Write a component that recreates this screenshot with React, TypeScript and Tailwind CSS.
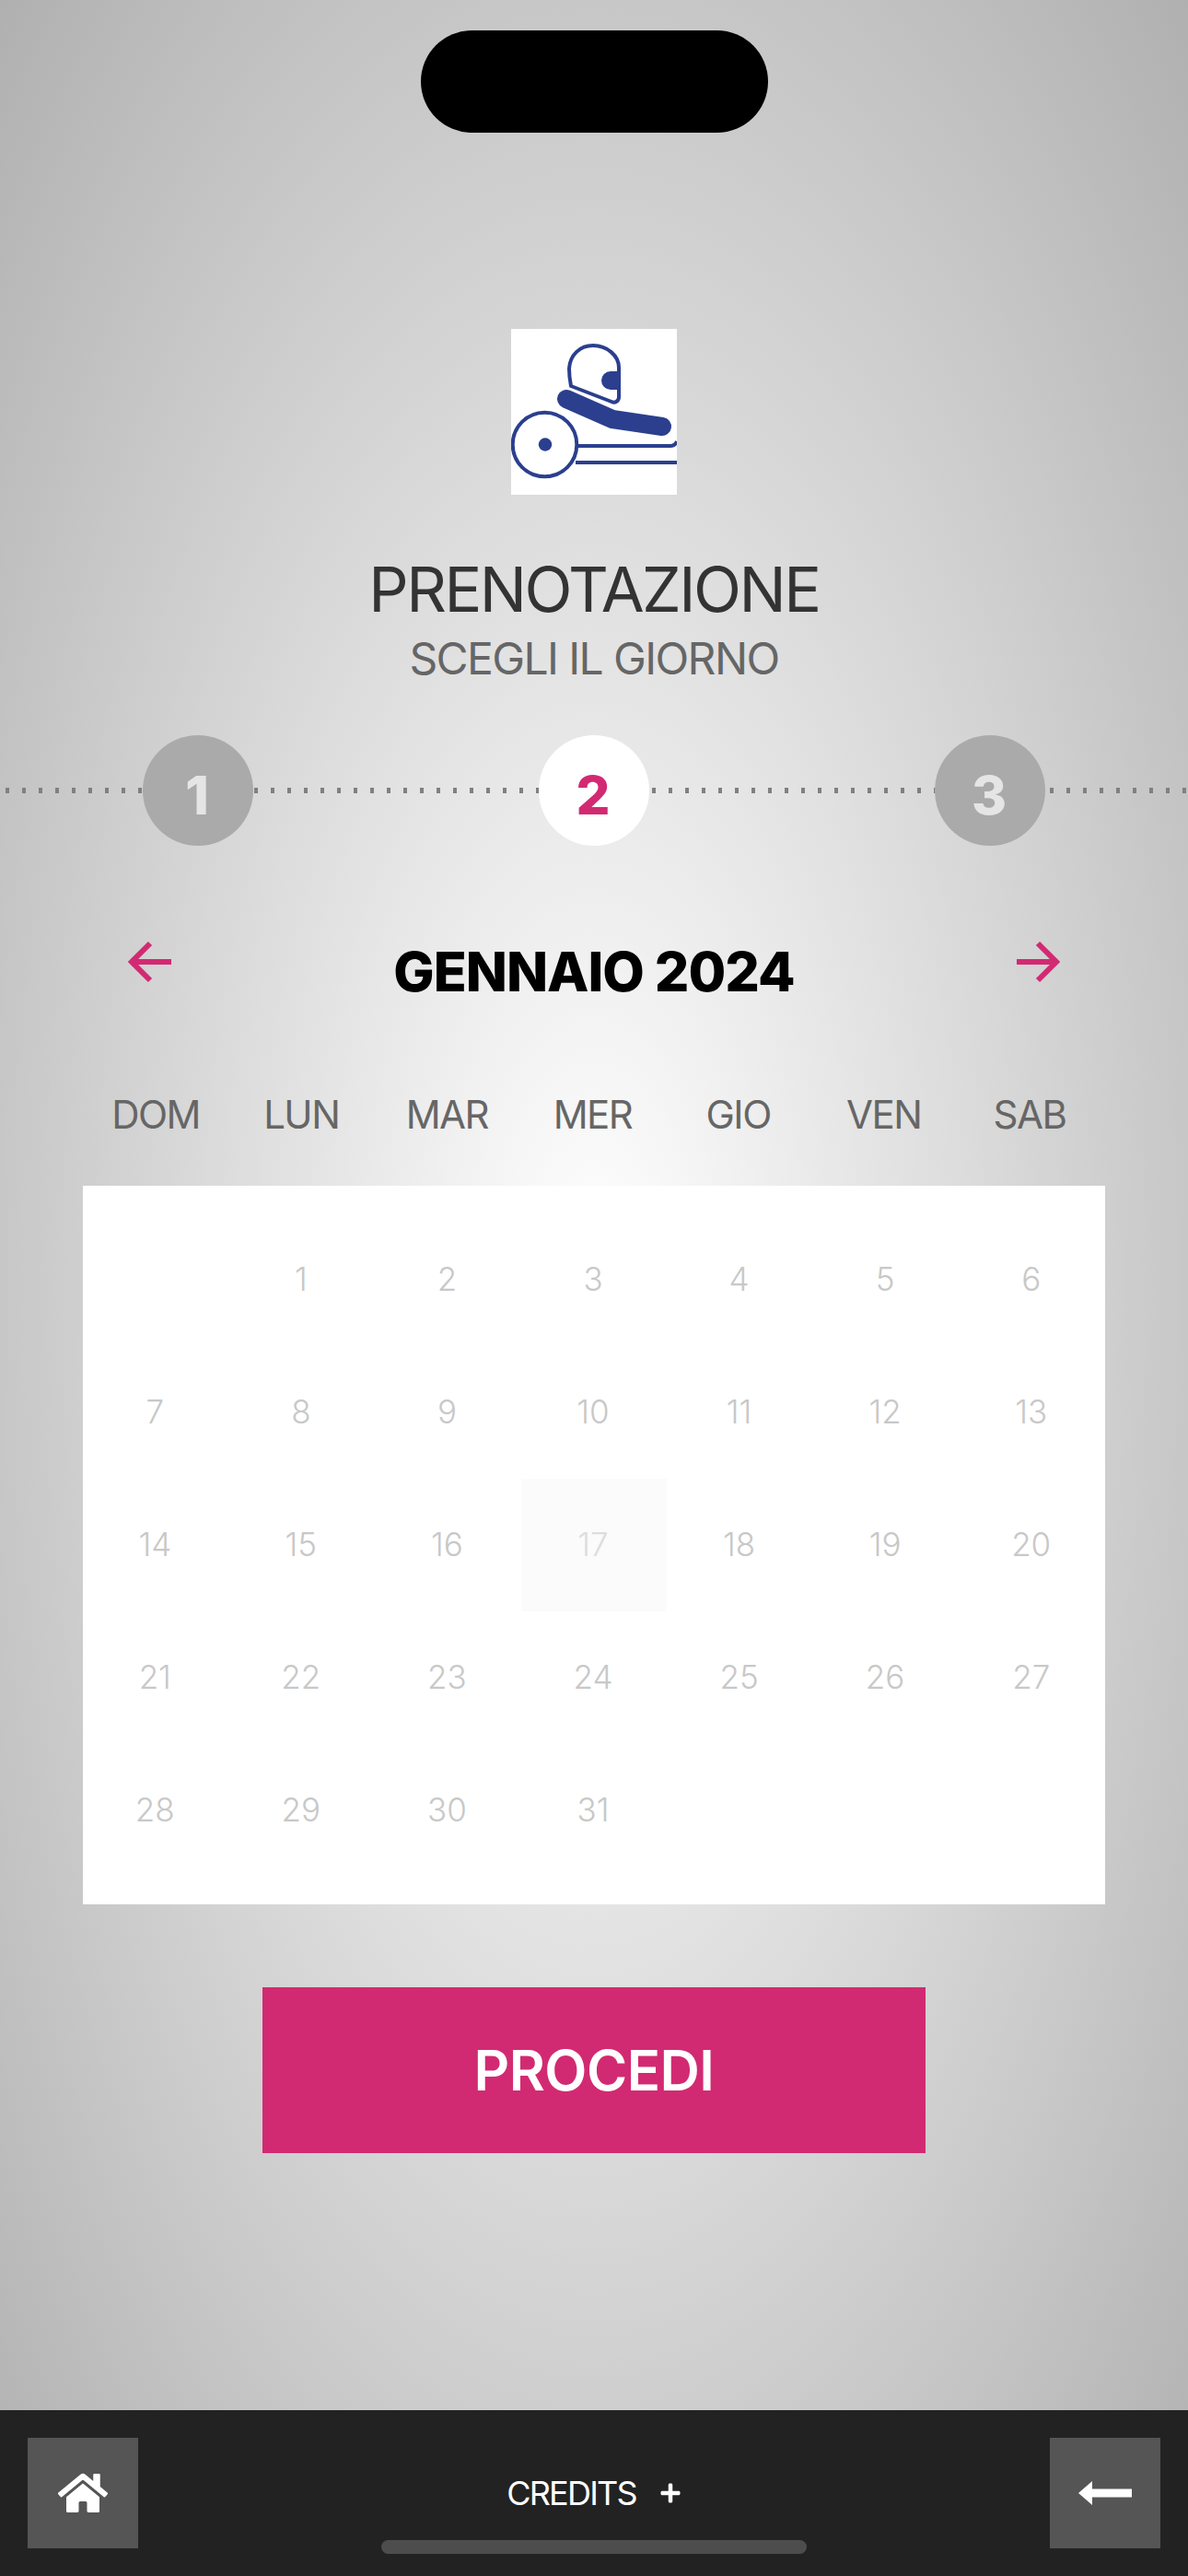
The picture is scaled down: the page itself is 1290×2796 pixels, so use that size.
import { FaHome, FaPlus } from "react-icons/fa";

const days = ["DOM", "LUN", "MAR", "MER", "GIO", "VEN", "SAB"];
const cells: (number | null)[] = [
  null, 1, 2, 3, 4, 5, 6,
  7, 8, 9, 10, 11, 12, 13,
  14, 15, 16, 17, 18, 19, 20,
  21, 22, 23, 24, 25, 26, 27,
  28, 29, 30, 31, null, null, null,
];

function Logo() {
  return (
    <svg viewBox="0 0 180 180" className="h-[180px] w-[180px] bg-white" fill="none" stroke="#2b3f8e">
      <circle cx="36.5" cy="125.5" r="34.8" strokeWidth="4" />
      <circle cx="37" cy="125.5" r="7.2" fill="#2b3f8e" stroke="none" />
      <path d="M65 62 C63 52 63 48 63 43 C64 28 75 18 89 18 C104 18 117 29 117 42 L117 74 C117 78 113 81 109 79 Z" strokeWidth="4" strokeLinejoin="round" />
      <path d="M117 46 L108 46 A10 10 0 0 0 108 66 L117 66 Z" fill="#2b3f8e" stroke="none" />
      <path d="M60 76 L110 98 L164 106" strokeWidth="20" strokeLinecap="round" strokeLinejoin="round" />
      <path d="M73 127 L173 127 Q178 127 180 122" strokeWidth="4" />
      <path d="M70 145 L180 145" strokeWidth="4" />
    </svg>
  );
}

function Step({ n, active }: { n: number; active?: boolean }) {
  return (
    <div
      className={
        active
          ? "flex h-[120px] w-[120px] items-center justify-center rounded-full bg-white pt-[10px] pr-[2px] text-[58px] leading-none font-extrabold text-[#d22a72]"
          : "flex h-[120px] w-[120px] items-center justify-center rounded-full bg-[#aaaaaa] pt-[10px] pr-[2px] text-[58px] leading-none font-extrabold text-[#e5e5e5]"
      }
    >
      {n}
    </div>
  );
}

function NavArrow({ right }: { right?: boolean }) {
  return (
    <svg viewBox="0 0 47 46" className="h-[46px] w-[47px]" fill="none" stroke="#d22a72" strokeWidth="6">
      {right ? <path d="M0 23 H44 M23 3 L43 23 L23 43" /> : <path d="M47 23 H3 M24 3 L4 23 L24 43" />}
    </svg>
  );
}

export default function App() {
  return (
    <div className="relative flex min-h-[2796px] flex-col bg-[radial-gradient(ellipse_at_center,#ffffff,#b0b0b0)] font-['Inter',sans-serif]">
      <div className="absolute top-[33px] left-[457px] h-[111px] w-[377px] rounded-full bg-black" />

      <main className="flex flex-1 flex-col items-center pt-[357px]">
        <Logo />
        <h1 className="mt-[62px] text-[68px] leading-[80px] font-normal tracking-[-2.5px] text-[#333333]">PRENOTAZIONE</h1>
        <h2 className="mt-[8px] text-[48px] leading-[56px] font-normal tracking-[-1.6px] text-[#666666]">SCEGLI IL GIORNO</h2>

        <div className="mt-[55px] flex w-full justify-center gap-[310px] bg-[linear-gradient(90deg,#808080_4px,transparent_4px)] bg-[length:18px_6px] bg-[position:6px_center] bg-repeat-x">
          <Step n={1} />
          <Step n={2} active />
          <Step n={3} />
        </div>

        <div className="mt-[103px] flex w-full items-start justify-between px-[139px]">
          <NavArrow />
          <div className="text-[59px] leading-[68px] font-extrabold tracking-[-1px] text-black">GENNAIO 2024</div>
          <NavArrow right />
        </div>

        <div className="mt-[96px] grid w-[1110px] grid-cols-7 pr-[3px]">
          {days.map((d) => (
            <div key={d} className="text-center text-[42px] leading-[50px] font-normal tracking-[-1.5px] text-[#666666]">
              {d}
            </div>
          ))}
        </div>

        <div className="mt-[52px] grid w-[1110px] grid-cols-7 bg-white py-[30px]">
          {cells.map((c, i) => (
            <div
              key={i}
              className={
                c === 17
                  ? "flex h-[144px] items-center justify-center bg-[#fafbfa] pr-[2px] pb-[1px] text-[35px] font-light text-[#dddddd]"
                  : "flex h-[144px] items-center justify-center pr-[2px] pb-[1px] text-[35px] font-light text-[#c8c8c8]"
              }
            >
              {c}
            </div>
          ))}
        </div>

        <button className="mt-[90px] h-[180px] w-[720px] bg-[#d22a72] text-[60px] font-semibold tracking-[-0.5px] text-white">PROCEDI</button>
      </main>

      <footer className="relative flex h-[180px] items-center justify-between bg-[#222222] px-[30px]">
        <div className="flex h-[120px] w-[120px] items-center justify-center bg-[#555555] text-white">
          <FaHome className="h-[54px] w-[54px]" />
        </div>
        <div className="flex items-center gap-[25px] text-[36px] leading-none font-normal tracking-[-1.8px] text-white">
          <span>CREDITS</span>
          <FaPlus className="h-[24px] w-[24px]" />
        </div>
        <div className="flex h-[120px] w-[120px] items-center justify-center bg-[#555555]">
          <svg viewBox="0 0 58 26" className="h-[26px] w-[58px]" fill="#ffffff">
            <path d="M0 13 L15 0 L15 8.5 L58 8.5 L58 17.5 L15 17.5 L15 26 Z" />
          </svg>
        </div>
        <div className="absolute bottom-[24px] left-[414px] h-[15px] w-[462px] rounded-full bg-[#4d4d4d]" />
      </footer>
    </div>
  );
}
